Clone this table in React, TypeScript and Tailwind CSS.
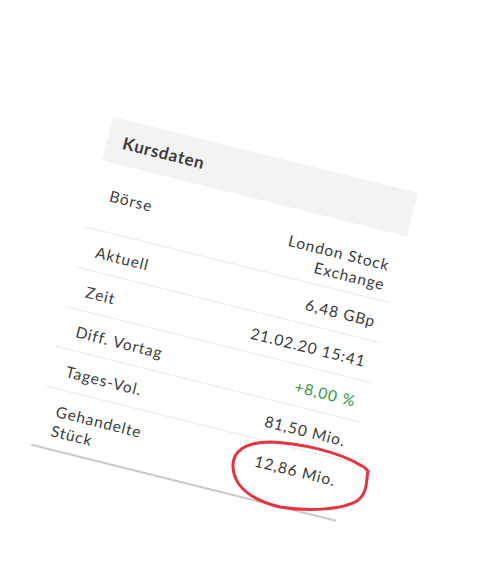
const rows: { label: string; value: string; green?: boolean; pad: string }[] = [
  { label: "Börse", value: "London Stock Exchange", pad: "pt-[22px] pb-[6px]" },
  { label: "Aktuell", value: "6,48 GBp", pad: "pt-[11px] pb-[9px]" },
  { label: "Zeit", value: "21.02.20 15:41", pad: "pt-[11px] pb-[9px]" },
  { label: "Diff. Vortag", value: "+8,00 %", green: true, pad: "pt-[11px] pb-[9px]" },
  { label: "Tages-Vol.", value: "81,50 Mio.", pad: "pt-[11px] pb-[9px]" },
  { label: "Gehandelte Stück", value: "12,86 Mio.", pad: "pt-[11px] pb-[8px]" },
];

export default function App() {
  return (
    <div
      className="relative w-[493px] h-[576px] overflow-hidden bg-white text-[#3b3b3b]"
      style={{ fontFamily: "Lato, 'Open Sans', sans-serif" }}
    >
      <div className="origin-top-left rotate-[14deg] pl-[138px] pt-[86px]">
        <div className="w-[314px] bg-white">
          <div className="bg-[#f3f3f3] px-4 pt-[11px] pb-[10px] h-[45px]">
            <h3 className="text-[17px] leading-6 font-bold tracking-[0.04em]">
              Kursdaten
            </h3>
          </div>
          {rows.map((row, i) => (
            <div
              key={row.label}
              className={
                "flex justify-between pl-4 pr-[10px] text-[15.5px] leading-5 tracking-[0.06em] " +
                row.pad +
                (i < rows.length - 1
                  ? " border-b border-[#e9e9e9]"
                  : " border-b-2 border-[#c9c9c9]")
              }
            >
              <span className="w-[100px]">{row.label}</span>
              <span
                className={
                  "w-[140px] text-right " + (row.green ? "text-[#2f9a45]" : "")
                }
              >
                {row.value}
              </span>
            </div>
          ))}
        </div>
      </div>
      <svg
        className="absolute left-0 top-0 pointer-events-none"
        width="493"
        height="576"
        viewBox="0 0 493 576"
      >
        <path
          d="M362 466 C340 452 300 443 270 442 C246 442 232 451 233 467 C234 485 248 499 280 507 C310 512 344 509 357 501 C368 493 366 481 368 471 L364 467"
          fill="none"
          stroke="#e3343f"
          strokeWidth="3"
          strokeLinecap="round"
          strokeLinejoin="round"
        />
      </svg>
    </div>
  );
}
